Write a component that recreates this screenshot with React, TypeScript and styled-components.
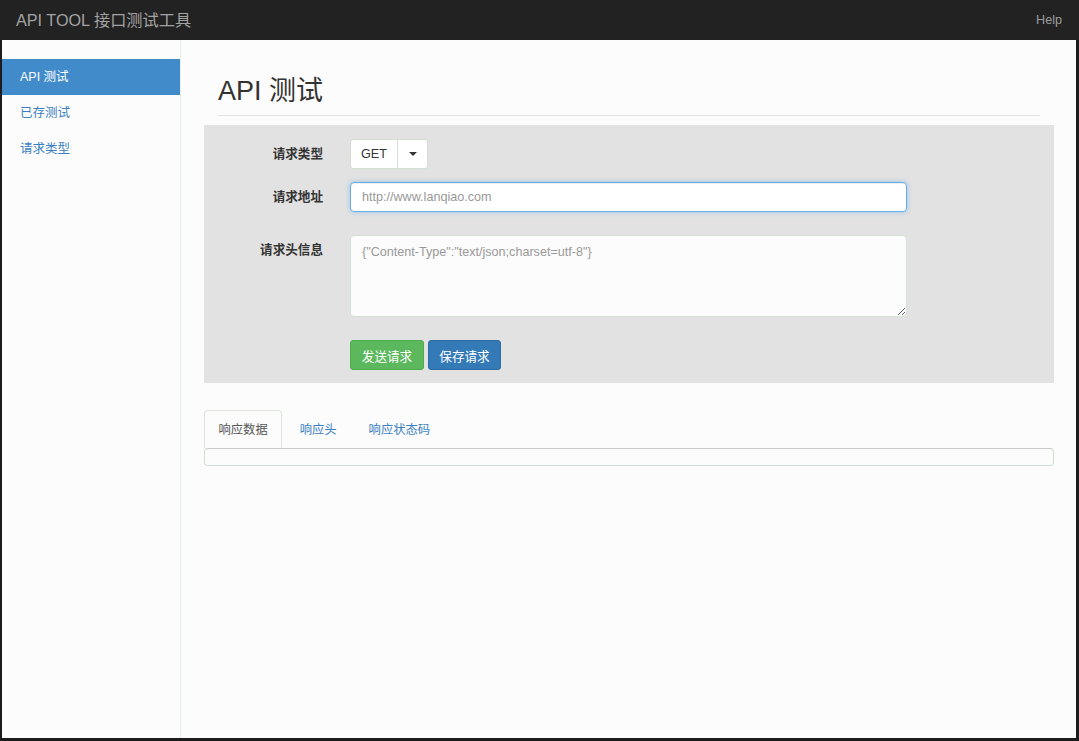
import React from "react";
import styled, { createGlobalStyle } from "styled-components";

const Global = createGlobalStyle`
  html, body { margin: 0; padding: 0; background: #1c1c1c; }
  body { font-family: "Liberation Sans", Arial, "Noto Sans CJK SC", sans-serif; font-size: 12.6px; color: #333; }
  * { box-sizing: border-box; }
`;

const Frame = styled.div`
  width: 1079px;
  height: 741px;
  display: flex;
  flex-direction: column;
  background: #1c1c1c;
  overflow: hidden;
`;

const Navbar = styled.header`
  height: 40px;
  flex: none;
  background: #222;
  display: flex;
  align-items: center;
  justify-content: space-between;
  padding: 0 17px 0 16px;
`;

const Brand = styled.div`
  color: #a3a3a3;
  font-size: 16.2px;
  line-height: 20px;
`;

const NavLink = styled.a`
  color: #9d9d9d;
  font-size: 12.6px;
  text-decoration: none;
`;

const Body = styled.div`
  flex: 1;
  display: flex;
  margin: 0 3px 3px 2px;
  background: #fcfcfc;
  min-height: 0;
`;

const Sidebar = styled.nav`
  width: 179px;
  flex: none;
  border-right: 1px solid #e5f0e5;
  padding-top: 19px;
  display: flex;
  flex-direction: column;
`;

const SideItem = styled.a<{ $active?: boolean }>`
  display: block;
  height: 36px;
  line-height: 37px;
  padding-left: 18px;
  font-size: 12.5px;
  text-decoration: none;
  color: ${(p) => (p.$active ? "#fff" : "#3a7fc0")};
  background: ${(p) => (p.$active ? "#428bca" : "transparent")};
`;

const Main = styled.main`
  flex: 1;
  padding: 0 22px 0 23px;
`;

const PageHeader = styled.div`
  margin: 0 14px 9px 14px;
  padding-top: 36px;
  padding-bottom: 9px;
  border-bottom: 1px solid #e3e3e3;
`;

const Title = styled.h1`
  margin: 0;
  font-size: 27px;
  line-height: 30px;
  font-weight: 400;
  color: #333;
`;

const FormPanel = styled.section`
  background: #e2e2e2;
  padding: 14px 0 13px 0;
  display: flex;
  flex-direction: column;
`;

const Row = styled.div<{ $mt?: number }>`
  display: flex;
  align-items: flex-start;
  gap: 27px;
  margin-top: ${(p) => p.$mt ?? 0}px;
`;

const Label = styled.label`
  width: 119px;
  flex: none;
  text-align: right;
  font-weight: 700;
  font-size: 12.6px;
  line-height: 30px;
  color: #333;
`;

const Control = styled.div`
  width: 557px;
  display: flex;
  gap: 4px;
`;

const BtnGroup = styled.div`
  display: flex;
  height: 30px;
`;

const GroupBtn = styled.button<{ $w: number; $first?: boolean }>`
  width: ${(p) => p.$w}px;
  height: 30px;
  background: #fff;
  border: 1px solid #d3dfd3;
  border-left-width: ${(p) => (p.$first ? 1 : 0)}px;
  border-radius: ${(p) => (p.$first ? "3px 0 0 3px" : "0 3px 3px 0")};
  font-family: inherit;
  font-size: 12.6px;
  color: #333;
  padding: 0;
  display: flex;
  align-items: center;
  justify-content: center;
`;

const Caret = styled.span`
  width: 0;
  height: 0;
  border-left: 4px solid transparent;
  border-right: 4px solid transparent;
  border-top: 4px solid #333;
`;

const TextInput = styled.input`
  width: 557px;
  height: 30px;
  padding: 0 11px;
  border: 1px solid #66afe9;
  border-radius: 4px;
  outline: none;
  background: #fff;
  box-shadow: inset 0 1px 1px rgba(0, 0, 0, 0.075), 0 0 5px rgba(102, 175, 233, 0.6);
  font-family: inherit;
  font-size: 12.6px;
  color: #555;
  &::placeholder { color: #999; }
`;

const TextArea = styled.textarea`
  width: 557px;
  height: 82px;
  padding: 6px 11px;
  border: 1px solid #d3e3d3;
  border-radius: 4px;
  outline: none;
  background: #fcfcfc;
  font-family: inherit;
  font-size: 12.6px;
  line-height: 20px;
  color: #555;
  resize: vertical;
  &::placeholder { color: #999; }
`;

const Button = styled.button<{ $variant: "success" | "primary"; $w: number }>`
  width: ${(p) => p.$w}px;
  height: 30px;
  border-radius: 3px;
  border: 1px solid ${(p) => (p.$variant === "success" ? "#4cae4c" : "#2e6da4")};
  background: ${(p) => (p.$variant === "success" ? "#5cb85c" : "#337ab7")};
  color: #fff;
  font-family: inherit;
  font-size: 12.6px;
  padding: 0;
`;

const Tabs = styled.div`
  margin-top: 27px;
  display: flex;
  gap: 3px;
`;

const Tab = styled.a<{ $active?: boolean }>`
  height: 38px;
  line-height: 38px;
  padding: 0 13.5px;
  font-size: 12.3px;
  text-decoration: none;
  color: ${(p) => (p.$active ? "#555" : "#3a7fc0")};
  background: ${(p) => (p.$active ? "#fcfcfc" : "transparent")};
  border: 1px solid ${(p) => (p.$active ? "#dde6dd" : "transparent")};
  border-bottom: none;
  border-radius: 4px 4px 0 0;
`;

const ResultBox = styled.div`
  height: 18px;
  border: 1px solid #cfe0cf;
  border-top-color: #c8c8c8;
  border-radius: 4px;
  background: #fcfcfc;
`;

export default function App() {
  return (
    <>
      <Global />
      <Frame>
        <Navbar>
          <Brand>API TOOL 接口测试工具</Brand>
          <NavLink href="#">Help</NavLink>
        </Navbar>
        <Body>
          <Sidebar>
            <SideItem $active href="#">API 测试</SideItem>
            <SideItem href="#">已存测试</SideItem>
            <SideItem href="#">请求类型</SideItem>
          </Sidebar>
          <Main>
            <PageHeader>
              <Title>API 测试</Title>
            </PageHeader>
            <FormPanel>
              <Row>
                <Label>请求类型</Label>
                <BtnGroup>
                  <GroupBtn $first $w={48}>GET</GroupBtn>
                  <GroupBtn $w={30}><Caret /></GroupBtn>
                </BtnGroup>
              </Row>
              <Row $mt={13}>
                <Label>请求地址</Label>
                <TextInput placeholder="http://www.lanqiao.com" />
              </Row>
              <Row $mt={23}>
                <Label>请求头信息</Label>
                <TextArea placeholder={'{"Content-Type":"text/json;charset=utf-8"}'} />
              </Row>
              <Row $mt={23}>
                <Label />
                <Control>
                  <Button $variant="success" $w={74}>发送请求</Button>
                  <Button $variant="primary" $w={73}>保存请求</Button>
                </Control>
              </Row>
            </FormPanel>
            <Tabs>
              <Tab $active href="#">响应数据</Tab>
              <Tab href="#">响应头</Tab>
              <Tab href="#">响应状态码</Tab>
            </Tabs>
            <ResultBox />
          </Main>
        </Body>
      </Frame>
    </>
  );
}
